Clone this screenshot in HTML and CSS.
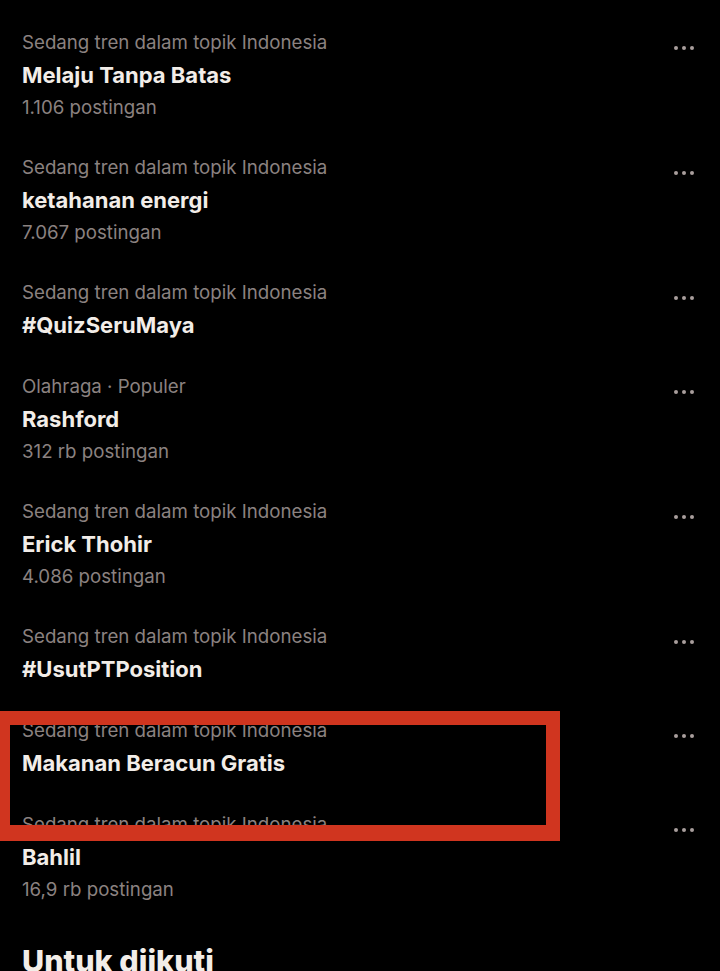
FILE: index.html
```html
<!DOCTYPE html>
<html lang="id">
<head>
<meta charset="utf-8">
<title>Tren</title>
<link rel="stylesheet" href="styles.css">
</head>
<body>
<div class="page">
  <div class="trend">
    <div class="info">
      <div class="cat">Sedang tren dalam topik Indonesia</div>
      <div class="title">Melaju Tanpa Batas</div>
      <div class="count">1.106 postingan</div>
    </div>
    <div class="more"><span></span><span></span><span></span></div>
  </div>
  <div class="trend">
    <div class="info">
      <div class="cat">Sedang tren dalam topik Indonesia</div>
      <div class="title">ketahanan energi</div>
      <div class="count">7.067 postingan</div>
    </div>
    <div class="more"><span></span><span></span><span></span></div>
  </div>
  <div class="trend">
    <div class="info">
      <div class="cat">Sedang tren dalam topik Indonesia</div>
      <div class="title">#QuizSeruMaya</div>
    </div>
    <div class="more"><span></span><span></span><span></span></div>
  </div>
  <div class="trend">
    <div class="info">
      <div class="cat">Olahraga · Populer</div>
      <div class="title">Rashford</div>
      <div class="count">312 rb postingan</div>
    </div>
    <div class="more"><span></span><span></span><span></span></div>
  </div>
  <div class="trend">
    <div class="info">
      <div class="cat">Sedang tren dalam topik Indonesia</div>
      <div class="title">Erick Thohir</div>
      <div class="count">4.086 postingan</div>
    </div>
    <div class="more"><span></span><span></span><span></span></div>
  </div>
  <div class="trend">
    <div class="info">
      <div class="cat">Sedang tren dalam topik Indonesia</div>
      <div class="title">#UsutPTPosition</div>
    </div>
    <div class="more"><span></span><span></span><span></span></div>
  </div>
  <div class="trend">
    <div class="info">
      <div class="cat">Sedang tren dalam topik Indonesia</div>
      <div class="title">Makanan Beracun Gratis</div>
    </div>
    <div class="more"><span></span><span></span><span></span></div>
  </div>
  <div class="trend">
    <div class="info">
      <div class="cat">Sedang tren dalam topik Indonesia</div>
      <div class="title">Bahlil</div>
      <div class="count">16,9 rb postingan</div>
    </div>
    <div class="more"><span></span><span></span><span></span></div>
  </div>
  <h2 class="section">Untuk diikuti</h2>
  <div class="highlight"></div>
</div>
</body>
</html>
```

FILE: styles.css
```css
html, body {
  margin: 0;
  padding: 0;
  background: #000;
}
body {
  width: 720px;
  height: 971px;
  overflow: hidden;
  font-family: Inter, "Noto Sans", "Liberation Sans", sans-serif;
}
.page {
  position: relative;
  padding-top: 12px;
}
.trend {
  display: flex;
  justify-content: space-between;
  align-items: flex-start;
  padding: 15px 26px 14px 22px;
}
.cat {
  font-size: 18.7px;
  line-height: 32px;
  color: #8b8280;
}
.title {
  font-size: 22px;
  line-height: 33px;
  font-weight: 700;
  color: #f2ede8;
}
.count {
  font-size: 18.7px;
  line-height: 31px;
  color: #8b8280;
}
.more {
  display: flex;
  gap: 4px;
  margin-top: 19px;
}
.more span {
  width: 4px;
  height: 4px;
  border-radius: 50%;
  background: #a89e9c;
}
.section {
  margin: 24px 0 0 22px;
  font-size: 30.5px;
  line-height: 36px;
  font-weight: 800;
  color: #f2ede8;
}
.highlight {
  position: absolute;
  left: 0;
  top: 711px;
  width: 536px;
  height: 100px;
  border-style: solid;
  border-color: #d0351f;
  border-width: 14px 14px 16px 10px;
}
```
